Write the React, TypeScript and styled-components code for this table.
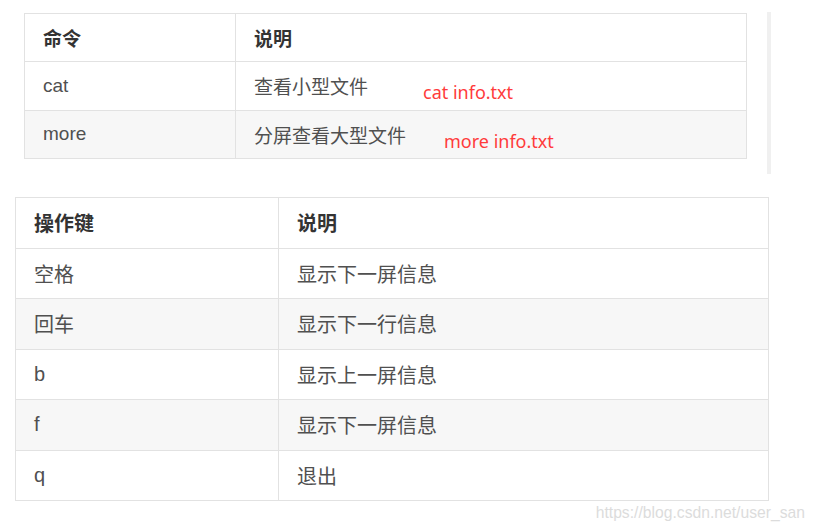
import React from 'react'
import styled, { createGlobalStyle } from 'styled-components'

const GlobalStyle = createGlobalStyle`
  html, body {
    margin: 0;
    padding: 0;
    background: #fff;
  }
  body {
    font-family: "Liberation Sans", "Noto Sans CJK SC", sans-serif;
    color: #505050;
  }
`

interface Row {
  key: string
  desc: string
  note?: string
  noteLeft?: number
}

const commands: Row[] = [
  { key: 'cat', desc: '查看小型文件', note: 'cat info.txt', noteLeft: 187 },
  { key: 'more', desc: '分屏查看大型文件', note: 'more info.txt', noteLeft: 208 },
]

const keys: Row[] = [
  { key: '空格', desc: '显示下一屏信息' },
  { key: '回车', desc: '显示下一行信息' },
  { key: 'b', desc: '显示上一屏信息' },
  { key: 'f', desc: '显示下一屏信息' },
  { key: 'q', desc: '退出' },
]

export default function App() {
  return (
    <Page>
      <GlobalStyle />
      <TopBlock>
        <Table $width={723} $size={19} $rowHeight={48.3}>
          <colgroup>
            <col style={{ width: 211 }} />
            <col />
          </colgroup>
          <thead>
            <tr>
              <Th>命令</Th>
              <Th>说明</Th>
            </tr>
          </thead>
          <tbody>
            {commands.map((row) => (
              <tr key={row.key}>
                <Td>{row.key}</Td>
                <Td>
                  {row.desc}
                  {row.note && <Note style={{ left: row.noteLeft }}>{row.note}</Note>}
                </Td>
              </tr>
            ))}
          </tbody>
        </Table>
        <ScrollBar />
      </TopBlock>

      <BottomBlock>
        <Table $width={754} $size={20} $rowHeight={50.5}>
          <colgroup>
            <col style={{ width: 263 }} />
            <col />
          </colgroup>
          <thead>
            <tr>
              <Th>操作键</Th>
              <Th>说明</Th>
            </tr>
          </thead>
          <tbody>
            {keys.map((row) => (
              <tr key={row.key}>
                <Td>{row.key}</Td>
                <Td>{row.desc}</Td>
              </tr>
            ))}
          </tbody>
        </Table>
      </BottomBlock>

      <Watermark>https://blog.csdn.net/user_san</Watermark>
    </Page>
  )
}

const Page = styled.div`
  width: 814px;
  height: 532px;
  display: flex;
  flex-direction: column;
  overflow: hidden;
`

const TopBlock = styled.div`
  display: flex;
  align-items: flex-start;
  gap: 20px;
  padding: 13px 0 0 24px;
`

const BottomBlock = styled.div`
  padding: 23px 0 0 15px;
`

const Table = styled.table<{ $width: number; $size: number; $rowHeight: number }>`
  width: ${(p) => p.$width}px;
  border-collapse: collapse;
  table-layout: fixed;
  font-size: ${(p) => p.$size}px;
  border: 1px solid #e2e2e2;

  tr {
    height: ${(p) => p.$rowHeight}px;
  }

  tbody tr:nth-child(even) {
    background: #f7f7f7;
  }
`

const Th = styled.th`
  text-align: left;
  font-weight: bold;
  color: #333;
  padding: 0 18px;
  border: 1px solid #e2e2e2;
`

const Td = styled.td`
  position: relative;
  padding: 0 18px;
  border: 1px solid #e2e2e2;
  white-space: nowrap;
`

const Note = styled.span`
  position: absolute;
  top: 20px;
  font-family: "Noto Sans", sans-serif;
  font-size: 18px;
  line-height: 20px;
  color: #ff3b3b;
`

const ScrollBar = styled.div`
  width: 4px;
  height: 162px;
  margin-top: -1px;
  background: #f0f0f0;
`

const Watermark = styled.div`
  align-self: flex-end;
  margin: 3px 9px 0 0;
  font-family: "Liberation Sans", sans-serif;
  font-size: 15.7px;
  color: #dcdcdc;
`
